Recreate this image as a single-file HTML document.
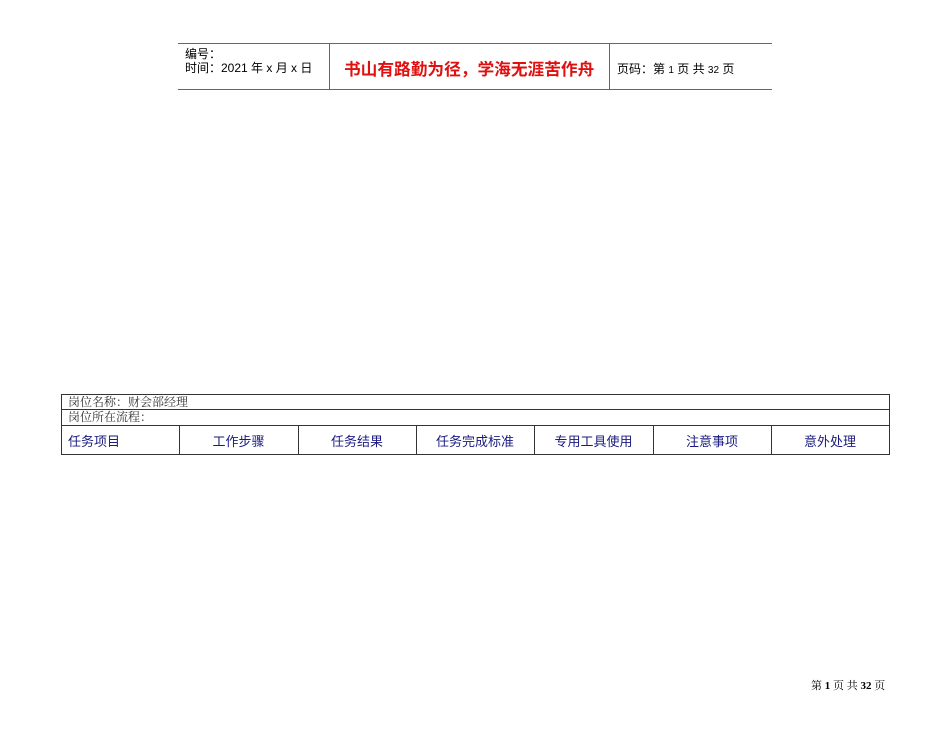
<!DOCTYPE html>
<html><head><meta charset="utf-8"><style>
body{margin:0;width:950px;height:735px;background:#fff;position:relative;overflow:hidden;font-family:"Liberation Sans","Noto Sans CJK SC",sans-serif}
.a{position:absolute;white-space:nowrap}
.h{position:absolute;background:#666}
.t{position:absolute;background:#333}
.s{font-family:"Liberation Serif","Noto Serif CJK SC",serif}
.c{position:absolute;top:427px;height:30px;line-height:30px;text-align:center;font-size:13px;color:#1a1a80}
</style></head><body>
<div class="h" style="left:178px;top:43px;width:594px;height:1px"></div>
<div class="h" style="left:178px;top:89px;width:594px;height:1px"></div>
<div class="h" style="left:329px;top:43px;width:1px;height:47px"></div>
<div class="h" style="left:609px;top:43px;width:1px;height:47px"></div>
<div class="a" style="left:185px;top:45px;font-size:12px">编号：</div>
<div class="a" style="left:185px;top:59px;font-size:12px">时间：2021 年 x 月 x 日</div>
<div class="a" style="left:344px;top:56px;font-size:16.7px;font-weight:bold;color:#e01010">书山有路勤为径，学海无涯苦作舟</div>
<div class="a" style="left:617px;top:60px;font-size:12px">页码：第 <span style="font-size:10px">1</span> 页 共 <span style="font-size:10px">32</span> 页</div>

<div class="t" style="left:61px;top:394px;width:829px;height:1px"></div>
<div class="t" style="left:61px;top:409px;width:829px;height:1px"></div>
<div class="t" style="left:61px;top:425px;width:829px;height:1px"></div>
<div class="t" style="left:61px;top:454px;width:829px;height:1px"></div>
<div class="t" style="left:61px;top:394px;width:1px;height:61px"></div>
<div class="t" style="left:889px;top:394px;width:1px;height:61px"></div>
<div class="t" style="left:179px;top:425px;width:1px;height:30px"></div>
<div class="t" style="left:298px;top:425px;width:1px;height:30px"></div>
<div class="t" style="left:416px;top:425px;width:1px;height:30px"></div>
<div class="t" style="left:534px;top:425px;width:1px;height:30px"></div>
<div class="t" style="left:653px;top:425px;width:1px;height:30px"></div>
<div class="t" style="left:771px;top:425px;width:1px;height:30px"></div>
<div class="a s" style="left:68px;top:395px;font-size:12px;line-height:14px;color:#333">岗位名称：财会部经理</div>
<div class="a s" style="left:68px;top:410px;font-size:12px;line-height:14px;color:#333">岗位所在流程：</div>
<div class="c" style="left:68px;text-align:left">任务项目</div>
<div class="c" style="left:179px;width:119px">工作步骤</div>
<div class="c" style="left:298px;width:118px">任务结果</div>
<div class="c" style="left:416px;width:118px">任务完成标准</div>
<div class="c" style="left:534px;width:119px">专用工具使用</div>
<div class="c" style="left:653px;width:118px">注意事项</div>
<div class="c" style="left:771px;width:118px">意外处理</div>
<div class="a s" style="left:811px;top:677px;font-size:11px">第 <b>1</b> 页 共 <b>32</b> 页</div>
</body></html>
